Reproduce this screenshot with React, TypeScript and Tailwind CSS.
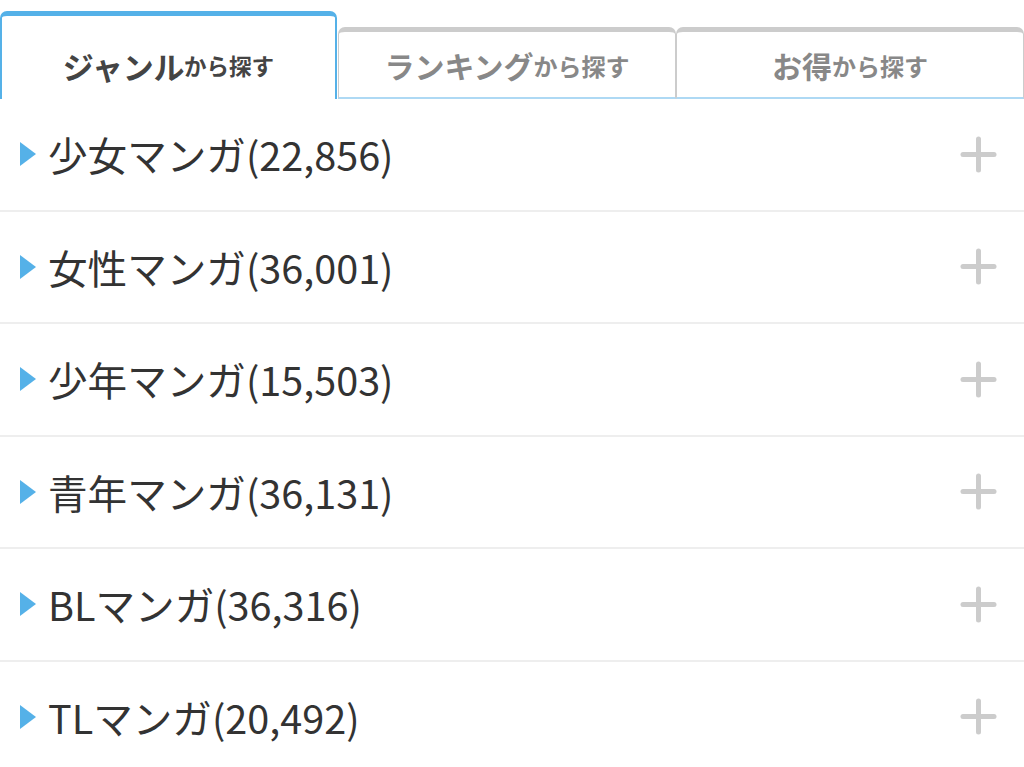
import React from "react";

const rows = [
  "少女マンガ(22,856)",
  "女性マンガ(36,001)",
  "少年マンガ(15,503)",
  "青年マンガ(36,131)",
  "BLマンガ(36,316)",
  "TLマンガ(20,492)",
];

const font = { fontFamily: '"Noto Sans CJK JP", "Noto Sans", sans-serif' };

export default function App() {
  return (
    <div className="w-[1024px] h-[767px] bg-white overflow-hidden" style={font}>
      <div className="flex items-end h-[99px]">
        <div className="w-[337px] h-[88px] border-x-2 border-t-[5px] border-[#55b1e8] rounded-t-[7px] flex items-center justify-center pt-[17px] text-[#444444] font-bold">
          <span className="text-[31px] tracking-[-0.3px]">ジャンル</span>
          <span className="text-[22.5px]">から探す</span>
        </div>
        <div className="ml-[1px] w-[338px] h-[72px] border-x border-t-[5px] border-b-2 border-[#cccccc] border-b-[#aed9f4] rounded-t-[7px] flex items-center justify-center pt-[2px] text-[#888888] font-bold">
          <span className="text-[30px]">ランキング</span>
          <span className="text-[24px]">から探す</span>
        </div>
        <div className="flex-1 h-[72px] border-x border-t-[5px] border-b-2 border-[#cccccc] border-b-[#aed9f4] rounded-t-[7px] flex items-center justify-center pt-[2px] text-[#888888] font-bold">
          <span className="text-[30px]">お得</span>
          <span className="text-[24px]">から探す</span>
        </div>
      </div>
      <div>
        {rows.map((r) => (
          <div
            key={r}
            className="h-[112.5px] border-b-2 border-[#eeeeee] flex items-center pl-[20px] pr-[27px]"
          >
            <svg width="16" height="24" viewBox="0 0 16 24" className="shrink-0">
              <polygon points="0,0 16,12 0,24" fill="#55b1e8" />
            </svg>
            <span className="ml-[12px] text-[39.6px] text-[#333333] leading-none">{r}</span>
            <svg width="37" height="37" viewBox="0 0 37 37" className="ml-auto shrink-0">
              <line x1="18.5" y1="3" x2="18.5" y2="34" stroke="#cccccc" strokeWidth="5" strokeLinecap="round" />
              <line x1="3" y1="18.5" x2="34" y2="18.5" stroke="#cccccc" strokeWidth="5" strokeLinecap="round" />
            </svg>
          </div>
        ))}
      </div>
    </div>
  );
}
